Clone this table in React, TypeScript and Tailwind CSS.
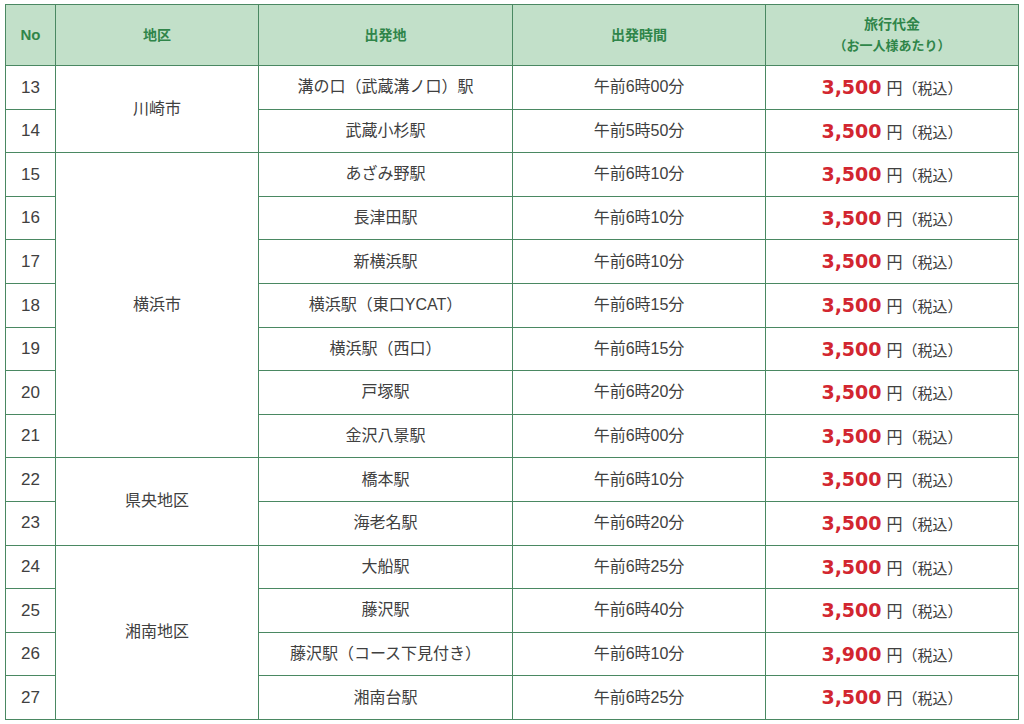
const rows = [
  { no: 13, area: "川崎市", span: 2, from: "溝の口（武蔵溝ノ口）駅", time: "午前6時00分", price: "3,500" },
  { no: 14, from: "武蔵小杉駅", time: "午前5時50分", price: "3,500" },
  { no: 15, area: "横浜市", span: 7, from: "あざみ野駅", time: "午前6時10分", price: "3,500" },
  { no: 16, from: "長津田駅", time: "午前6時10分", price: "3,500" },
  { no: 17, from: "新横浜駅", time: "午前6時10分", price: "3,500" },
  { no: 18, from: "横浜駅（東口YCAT）", time: "午前6時15分", price: "3,500" },
  { no: 19, from: "横浜駅（西口）", time: "午前6時15分", price: "3,500" },
  { no: 20, from: "戸塚駅", time: "午前6時20分", price: "3,500" },
  { no: 21, from: "金沢八景駅", time: "午前6時00分", price: "3,500" },
  { no: 22, area: "県央地区", span: 2, from: "橋本駅", time: "午前6時10分", price: "3,500" },
  { no: 23, from: "海老名駅", time: "午前6時20分", price: "3,500" },
  { no: 24, area: "湘南地区", span: 4, from: "大船駅", time: "午前6時25分", price: "3,500" },
  { no: 25, from: "藤沢駅", time: "午前6時40分", price: "3,500" },
  { no: 26, from: "藤沢駅（コース下見付き）", time: "午前6時10分", price: "3,900" },
  { no: 27, from: "湘南台駅", time: "午前6時25分", price: "3,500" },
];

const cell = "border border-[#4a8862] text-center align-middle";

export default function App() {
  return (
    <div className="min-h-screen bg-white pl-[5px] pt-[4px] font-['Liberation_Sans','Noto_Sans_CJK_JP',sans-serif] text-[#404040]">
      <table className="w-[1013px] table-fixed border-collapse">
        <colgroup>
          <col className="w-[50px]" />
          <col className="w-[203px]" />
          <col className="w-[254px]" />
          <col className="w-[253px]" />
          <col className="w-[253px]" />
        </colgroup>
        <thead>
          <tr className="h-[61px] bg-[#c2e0c9] text-[14px] font-bold text-[#2f8549]">
            <th className={cell + " text-[15px]"}>No</th>
            <th className={cell}>地区</th>
            <th className={cell}>出発地</th>
            <th className={cell}>出発時間</th>
            <th className={cell + " leading-[21px]"}>
              旅行代金
              <br />
              <span className="text-[13px]">（お一人様あたり）</span>
            </th>
          </tr>
        </thead>
        <tbody className="text-[16px]">
          {rows.map((r) => (
            <tr key={r.no} className="h-[43.6px]">
              <td className={cell + " text-[17px]"}>{r.no}</td>
              {r.area && (
                <td rowSpan={r.span} className={cell}>
                  {r.area}
                </td>
              )}
              <td className={cell}>{r.from}</td>
              <td className={cell}>{r.time}</td>
              <td className={cell}>
                <span className="font-['DejaVu_Sans',sans-serif] text-[19px] font-bold text-[#d22630]">
                  {r.price}
                </span>
                <span className="ml-[5px] text-[16px]">円</span>
                <span className="text-[15px]">（税込）</span>
              </td>
            </tr>
          ))}
        </tbody>
      </table>
    </div>
  );
}
